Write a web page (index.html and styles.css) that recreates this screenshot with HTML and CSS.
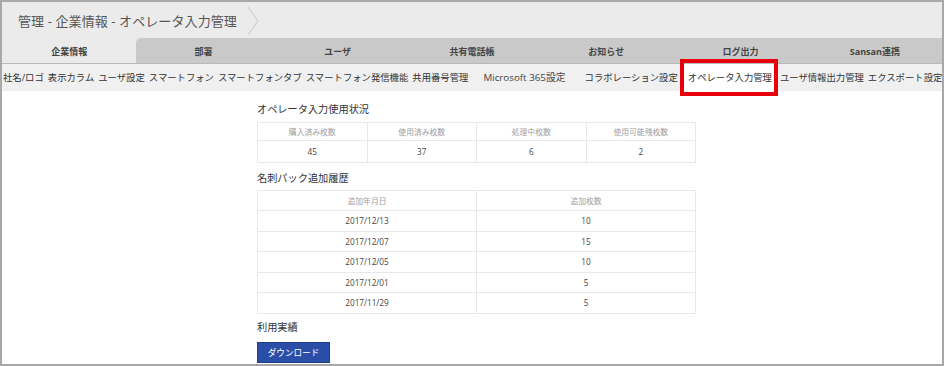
FILE: index.html
```html
<!DOCTYPE html>
<html lang="ja">
<head>
  <meta charset="UTF-8">
  <title>オペレータ入力管理</title>
  <link rel="stylesheet" href="styles.css">
</head>
<body>
  <div class="frame">
    <!-- パンくず -->
    <header class="crumb">
      <span class="crumb-text">管理 - 企業情報 - オペレータ入力管理</span>
      <svg class="chevron" width="12" height="30" viewBox="0 0 12 30">
        <polyline points="1,1 11,15 1,29" fill="none" stroke="#c9c9c9" stroke-width="1"/>
      </svg>
    </header>

    <!-- タブ -->
    <nav class="tabs">
      <div class="tab active">企業情報</div>
      <div class="tab first">部署</div>
      <div class="tab">ユーザ</div>
      <div class="tab">共有電話帳</div>
      <div class="tab">お知らせ</div>
      <div class="tab">ログ出力</div>
      <div class="tab">Sansan連携</div>
    </nav>

    <!-- サブメニュー -->
    <ul class="subnav">
      <li>社名/ロゴ</li>
      <li>表示カラム</li>
      <li>ユーザ設定</li>
      <li>スマートフォン</li>
      <li>スマートフォンタブ</li>
      <li>スマートフォン発信機能</li>
      <li>共用番号管理</li>
      <li class="ms">Microsoft 365設定</li>
      <li>コラボレーション設定</li>
      <li class="current">オペレータ入力管理</li>
      <li>ユーザ情報出力管理</li>
      <li>エクスポート設定</li>
    </ul>

    <!-- 本文 -->
    <main class="main">
      <h2>オペレータ入力使用状況</h2>
      <table class="usage">
        <tr>
          <th>購入済み枚数</th>
          <th>使用済み枚数</th>
          <th>処理中枚数</th>
          <th>使用可能残枚数</th>
        </tr>
        <tr>
          <td>45</td>
          <td>37</td>
          <td>6</td>
          <td>2</td>
        </tr>
      </table>

      <h2 class="second">名刺パック追加履歴</h2>
      <table class="history">
        <tr><th>追加年月日</th><th>追加枚数</th></tr>
        <tr><td>2017/12/13</td><td>10</td></tr>
        <tr><td>2017/12/07</td><td>15</td></tr>
        <tr><td>2017/12/05</td><td>10</td></tr>
        <tr><td>2017/12/01</td><td>5</td></tr>
        <tr><td>2017/11/29</td><td>5</td></tr>
      </table>

      <h2 class="third">利用実績</h2>
      <button class="download">ダウンロード</button>
    </main>
  </div>
</body>
</html>
```

FILE: styles.css
```css
/* 共通 */
body {
  margin: 0;
  padding: 0;
  background-color: #fff;
  font-family: "Open Sans", "Noto Sans CJK JP", sans-serif;
  color: #333;
}

.frame {
  width: 944px;
  height: 366px;
  box-sizing: border-box;
  border: 2px solid #a8a8a8;
  overflow: hidden;
  background-color: #fff;
}

/* パンくず */
.crumb {
  height: 36px;
  background-color: #ebebeb;
  display: flex;
  align-items: center;
  padding-left: 16px;
}

.crumb-text {
  font-size: 13px;
  color: #555;
  letter-spacing: 0.1px;
}

.chevron {
  margin-left: 10px;
  margin-top: 2px;
}

/* タブ */
.tabs {
  display: flex;
  height: 25px;
  background-color: #ebebeb;
  border-bottom: 1px solid #b9b9b9;
}

.tab {
  flex: 1;
  text-align: center;
  line-height: 27px;
  font-size: 9px;
  font-weight: bold;
  color: #444;
  background-color: #c9c9c9;
}

.tab.active {
  background-color: #ebebeb;
}

.tab.first {
  border-top-left-radius: 5px;
}

/* サブメニュー */
.subnav {
  list-style: none;
  margin: 0;
  padding: 0 0 0 1px;
  height: 27px;
  display: flex;
  align-items: center;
  gap: 4px;
  background-color: #f0f0f0;
  white-space: nowrap;
  font-size: 9.35px;
  color: #333;
}

.subnav li {
  line-height: 28px;
}

.subnav .ms {
  margin-left: 11px;
  margin-right: 15px;
  font-size: 9.8px;
  color: #444;
}

.subnav .current {
  position: relative;
  background-color: #fff;
  padding: 0 4px;
  margin-left: 2px;
}

.subnav .current::after {
  content: "";
  position: absolute;
  left: -4px;
  right: -2px;
  top: -5px;
  bottom: -4px;
  border: 4px solid #e8000b;
}

/* 本文 */
.main {
  margin-left: 255px;
  width: 439px;
}

.main h2 {
  margin: 10px 0 5px;
  font-size: 10.2px;
  font-weight: normal;
  line-height: 16px;
  color: #333;
}

.main h2.second {
  margin: 7px 0 4px;
}

.main h2.third {
  margin: 5px 0 4px;
}

table {
  width: 100%;
  border-collapse: collapse;
  table-layout: fixed;
}

th,
td {
  border: 1px solid #e8e8e8;
  text-align: center;
  padding: 0;
}

th {
  font-size: 7.8px;
  font-weight: normal;
  color: #a0a0a0;
}

td {
  font-size: 8.2px;
  color: #444;
}

.usage th {
  height: 17px;
}

.usage td {
  height: 21px;
}

.history th {
  height: 19px;
}

.history td {
  height: 19.5px;
}

.download {
  width: 73px;
  height: 21px;
  padding: 0;
  border: 1px solid #1f3f8f;
  background-color: #2a4ea8;
  color: #fff;
  font-family: "Open Sans", "Noto Sans CJK JP", sans-serif;
  font-size: 8.6px;
  cursor: pointer;
}
```
